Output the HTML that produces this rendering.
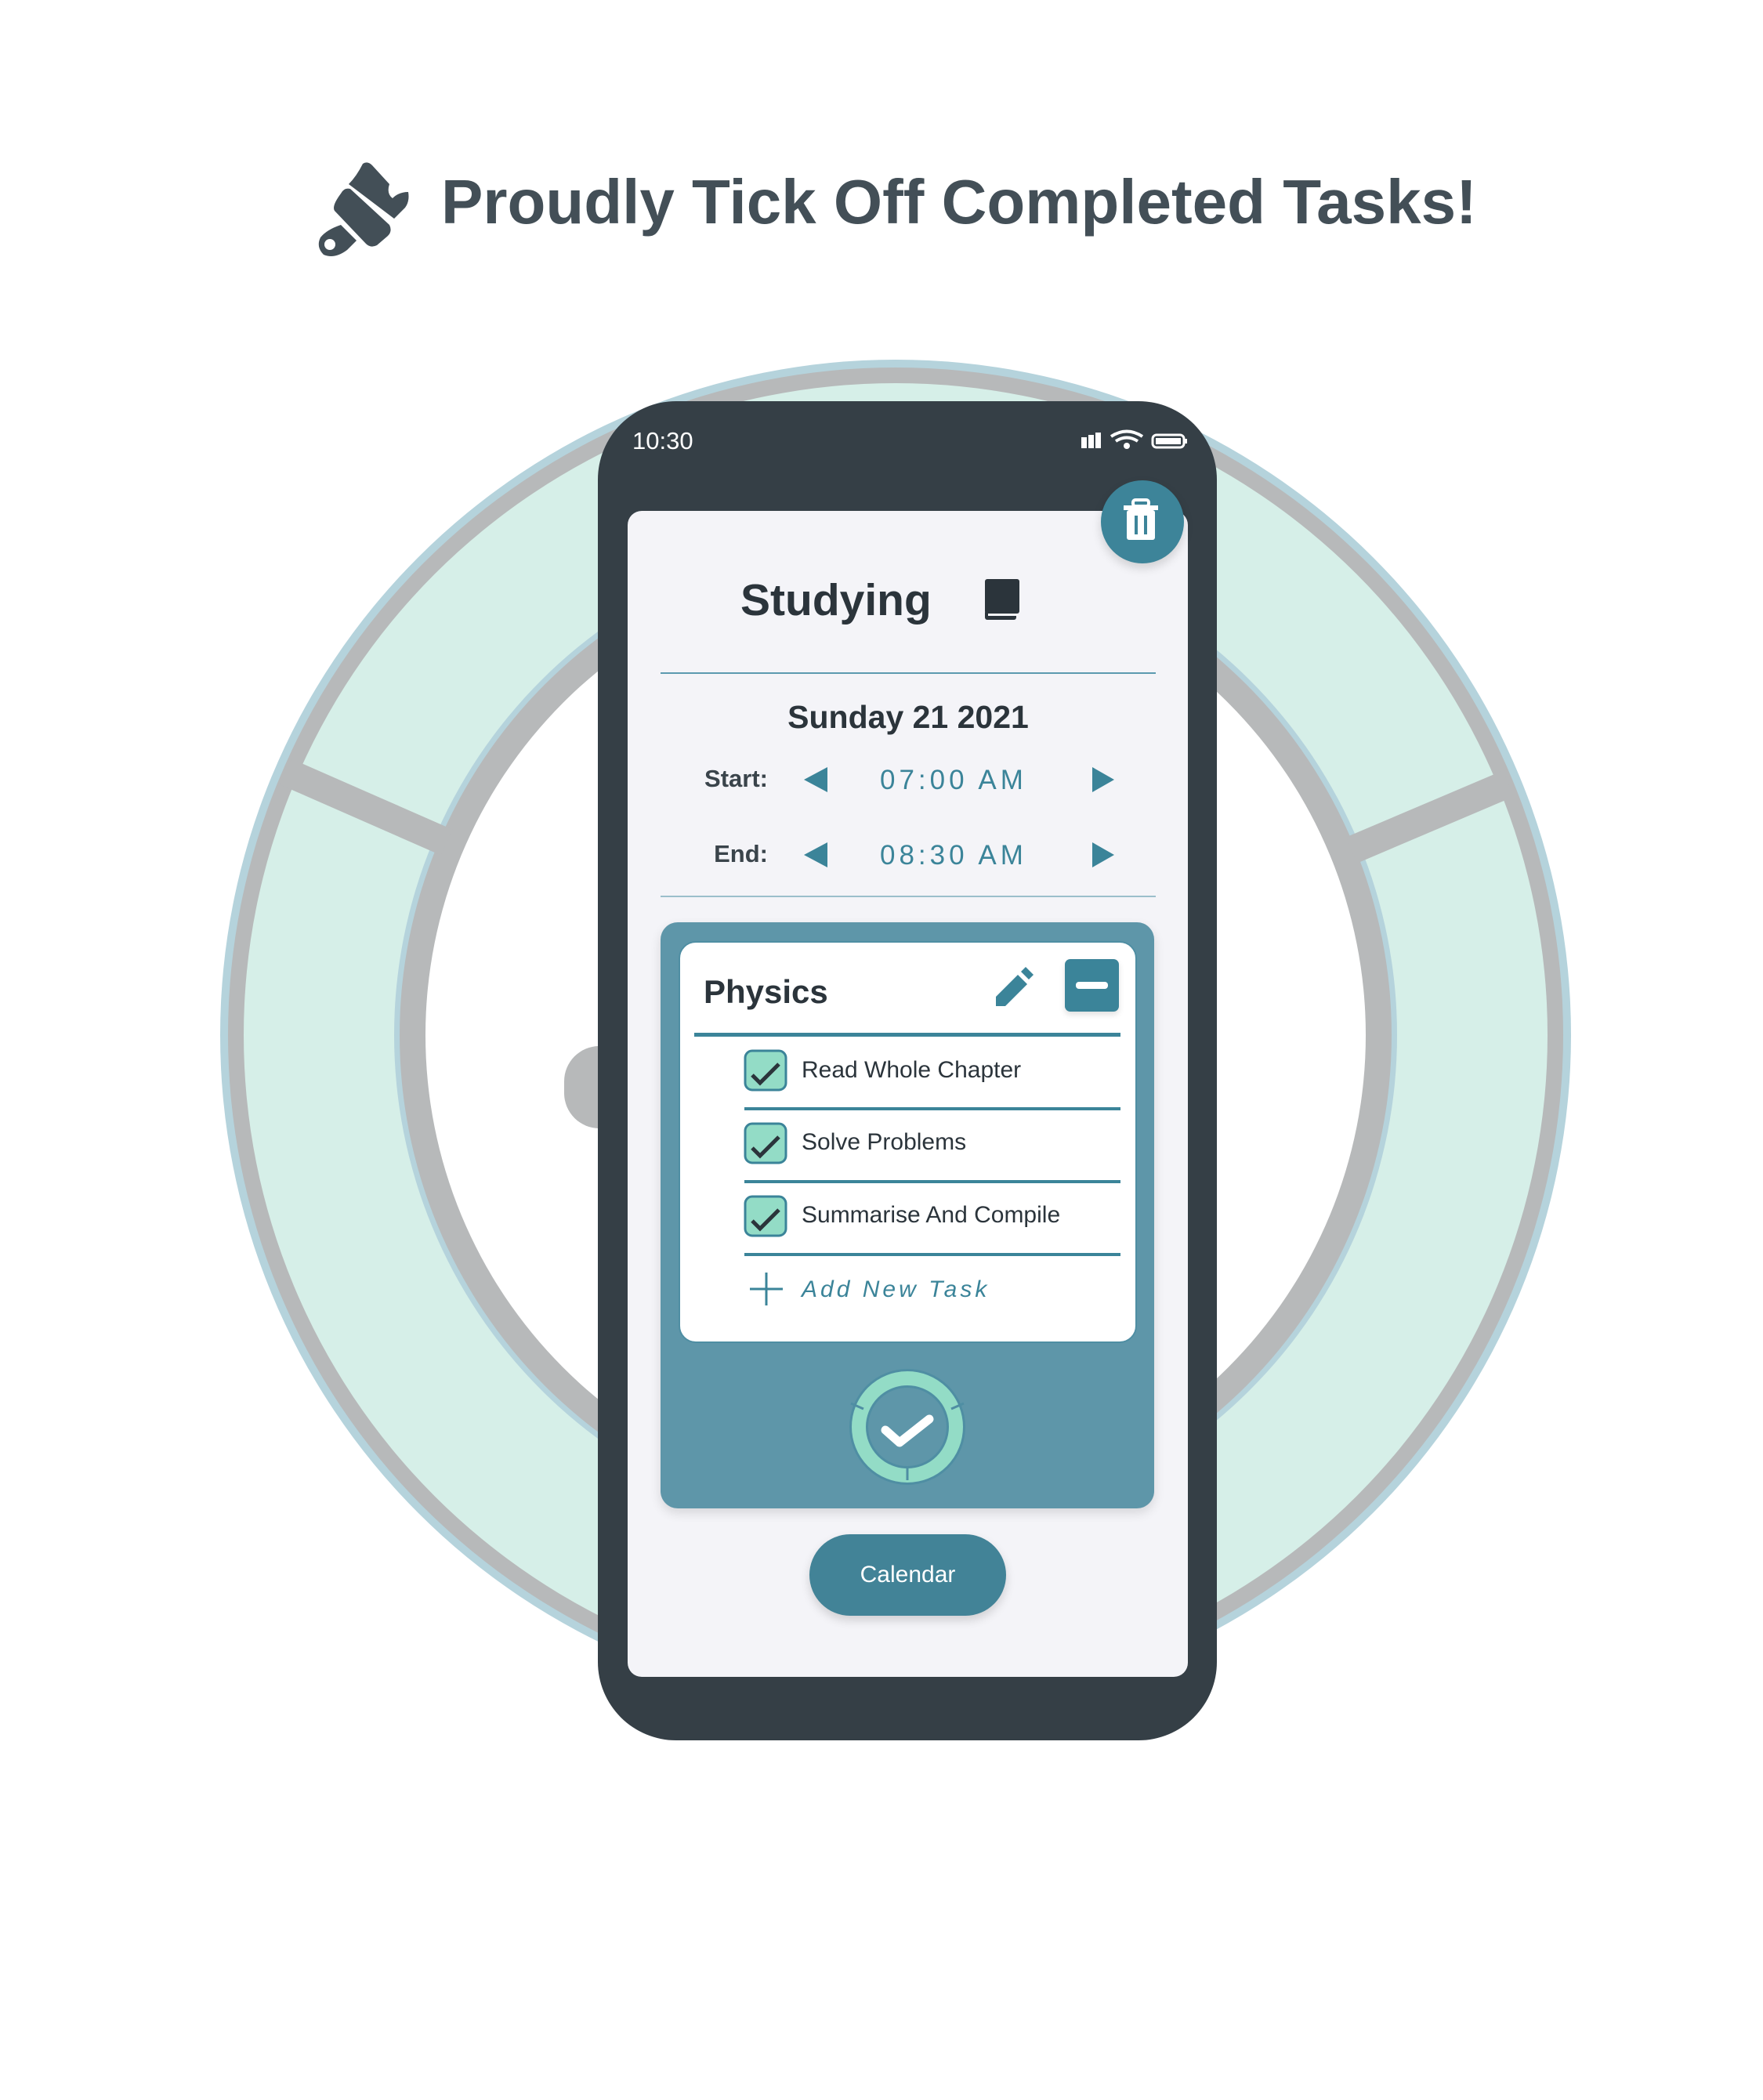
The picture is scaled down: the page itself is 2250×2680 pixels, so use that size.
<!DOCTYPE html>
<html><head><meta charset="utf-8"><style>
*{margin:0;padding:0;box-sizing:border-box}
body{width:2250px;height:2680px;background:#fff;position:relative;overflow:hidden;font-family:"Liberation Sans",sans-serif}
.a{position:absolute}
.t{position:absolute;white-space:nowrap}
</style></head><body>

<svg class="a" style="left:0;top:0" width="2250" height="2680">
 <circle cx="1143" cy="1321" r="862" fill="#b5d3dc"/>
 <circle cx="1143" cy="1321" r="852" fill="#b7b9ba"/>
 <circle cx="1143" cy="1321" r="832" fill="#d6efe8"/>
 <circle cx="1143" cy="1321" r="640" fill="#b5d3dc"/>
 <circle cx="1143" cy="1321" r="633" fill="#b7b9ba"/>
 <circle cx="1143" cy="1321" r="600" fill="#fff"/>
 <line x1="365" y1="985" x2="570" y2="1075" stroke="#b7b9ba" stroke-width="36"/>
 <line x1="1725" y1="1085" x2="1925" y2="1000" stroke="#b7b9ba" stroke-width="36"/>
 <rect x="720" y="1335" width="90" height="105" rx="45" fill="#b7b9ba"/>
 <g transform="translate(405,207)" fill="#434f57">
  <path d="M58 2 Q64 -2 70 4 L92 28 Q88 40 96 46 Q104 38 116 38 Q118 50 112 58 L98 72 L40 28 Q50 18 58 2 Z"/>
  <path d="M30 40 Q34 32 42 34 L92 80 Q96 88 90 94 L76 106 Q68 110 62 104 L22 62 Q18 56 30 40 Z"/>
  <path d="M30 80 L50 100 L38 112 Q22 124 8 118 Q-2 108 4 96 Q12 86 30 80 Z"/>
  <circle cx="16" cy="105" r="7" fill="#fff"/>
 </g>
</svg>
<div class="t" style="left:563px;top:212px;font-size:80px;color:#434f57;font-weight:bold">Proudly Tick Off Completed Tasks!</div>

<div class="a" style="left:763px;top:512px;width:790px;height:1709px;background:#353f46;border-radius:100px"></div>
<div class="t" style="left:807px;top:545px;font-size:31px;color:#fff">10:30</div>
<svg class="a" style="left:1378px;top:548px" width="140" height="30">
 <rect x="2" y="10" width="7" height="14" fill="#fff"/><rect x="11" y="7" width="7" height="17" fill="#fff"/><rect x="20" y="4" width="7" height="20" fill="#fff"/>
 <path d="M40 9 Q60 -4 80 9" stroke="#fff" stroke-width="4" fill="none"/><path d="M46 15 Q60 6 74 15" stroke="#fff" stroke-width="4" fill="none"/><circle cx="60" cy="21" r="4" fill="#fff"/>
 <rect x="93" y="7" width="40" height="16" rx="5" stroke="#fff" stroke-width="3" fill="none"/><rect x="97" y="11" width="32" height="8" fill="#fff"/><rect x="134" y="12" width="3" height="6" fill="#fff"/>
</svg>
<div class="a" style="left:801px;top:652px;width:715px;height:1488px;background:#f4f4f8;border-radius:18px"></div>

<div class="a" style="left:1405px;top:613px;width:106px;height:106px;border-radius:50%;background:#3d8499;box-shadow:0 6px 12px rgba(0,0,0,.15)"></div>
<svg class="a" style="left:1432px;top:636px" width="52" height="56"><rect x="14" y="2" width="20" height="8" rx="3" fill="none" stroke="#fff" stroke-width="4"/><rect x="2" y="9" width="44" height="6" fill="#fff"/><rect x="6" y="15" width="36" height="38" rx="3" fill="#fff"/><rect x="16" y="22" width="4" height="24" fill="#3d8499"/><rect x="28" y="22" width="4" height="24" fill="#3d8499"/></svg>

<div class="t" style="left:945px;top:733px;font-size:57px;color:#2b343b;font-weight:bold">Studying</div>
<svg class="a" style="left:1255px;top:739px" width="48" height="54"><rect x="2" y="0" width="44" height="44" rx="3" fill="#2b343b"/><rect x="2" y="40" width="40" height="12" rx="3" fill="#2b343b"/><rect x="6" y="44" width="36" height="3" fill="#f4f4f8"/></svg>
<div class="a" style="left:843px;top:858px;width:632px;height:2px;background:#5c9ab0"></div>
<div class="t" style="left:843px;width:632px;text-align:center;top:892px;font-size:41px;color:#2b343b;font-weight:bold">Sunday 21 2021</div>

<div class="t" style="left:880px;width:100px;text-align:right;top:976px;font-size:31px;color:#3a444b;font-weight:bold">Start:</div>
<div class="t" style="left:880px;width:100px;text-align:right;top:1072px;font-size:31px;color:#3a444b;font-weight:bold">End:</div>
<svg class="a" style="left:1024px;top:975px" width="400" height="140">
 <polygon points="2,20 32,4 32,36" fill="#3b8499"/><polygon points="398,20 370,4 370,36" fill="#3b8499"/>
 <polygon points="2,116 32,100 32,132" fill="#3b8499"/><polygon points="398,116 370,100 370,132" fill="#3b8499"/>
</svg>
<div class="t" style="left:1123px;top:976px;font-size:35px;color:#3b8499;letter-spacing:5px">07:00 AM</div>
<div class="t" style="left:1123px;top:1072px;font-size:35px;color:#3b8499;letter-spacing:5px">08:30 AM</div>
<div class="a" style="left:843px;top:1143px;width:632px;height:2px;background:#9bbfcb"></div>

<div class="a" style="left:843px;top:1177px;width:630px;height:748px;background:#5e96a9;border-radius:22px;box-shadow:0 6px 14px rgba(0,0,0,.12)"></div>
<div class="a" style="left:866px;top:1201px;width:585px;height:513px;background:#fff;border-radius:22px;border:2px solid #4f8ea3"></div>
<div class="t" style="left:898px;top:1242px;font-size:42px;color:#2b343b;font-weight:bold">Physics</div>
<svg class="a" style="left:1267px;top:1232px" width="52" height="52"><path d="M4 40 L32 12 L44 24 L16 52 L4 52 Z" fill="#3b8499"/><path d="M36 8 L42 2 L52 12 L46 18 Z" fill="#3b8499"/></svg>
<div class="a" style="left:1359px;top:1224px;width:69px;height:67px;background:#3b8499;border-radius:7px;box-shadow:0 4px 8px rgba(0,0,0,.12)"></div>
<div class="a" style="left:1373px;top:1253px;width:41px;height:9px;background:#fff;border-radius:4px"></div>
<div class="a" style="left:886px;top:1318px;width:544px;height:5px;background:#3b8499"></div>

<svg class="a" style="left:948px;top:1338px" width="60" height="260">
 <g><rect x="3" y="3" width="52" height="50" rx="9" fill="#93dcc6" stroke="#3b8499" stroke-width="3"/><path d="M12 34 L22 44 L46 20" stroke="#2b343b" stroke-width="5" fill="none"/></g>
 <g transform="translate(0,93)"><rect x="3" y="3" width="52" height="50" rx="9" fill="#93dcc6" stroke="#3b8499" stroke-width="3"/><path d="M12 34 L22 44 L46 20" stroke="#2b343b" stroke-width="5" fill="none"/></g>
 <g transform="translate(0,186)"><rect x="3" y="3" width="52" height="50" rx="9" fill="#93dcc6" stroke="#3b8499" stroke-width="3"/><path d="M12 34 L22 44 L46 20" stroke="#2b343b" stroke-width="5" fill="none"/></g>
</svg>
<div class="t" style="left:1023px;top:1349px;font-size:30px;color:#2b343b">Read Whole Chapter</div>
<div class="t" style="left:1023px;top:1441px;font-size:30px;color:#2b343b">Solve Problems</div>
<div class="t" style="left:1023px;top:1534px;font-size:30px;color:#2b343b">Summarise And Compile</div>
<div class="a" style="left:950px;top:1413px;width:480px;height:4px;background:#3b8499"></div>
<div class="a" style="left:950px;top:1506px;width:480px;height:4px;background:#3b8499"></div>
<div class="a" style="left:950px;top:1599px;width:480px;height:4px;background:#3b8499"></div>
<svg class="a" style="left:955px;top:1622px" width="46" height="46"><path d="M23 2 V44 M2 23 H44" stroke="#3b8499" stroke-width="3"/></svg>
<div class="t" style="left:1023px;top:1629px;font-size:30px;color:#3b8499;font-style:italic;letter-spacing:4px">Add New Task</div>

<svg class="a" style="left:1080px;top:1743px" width="156" height="156">
 <circle cx="78" cy="78" r="62" fill="none" stroke="#4f8ea3" stroke-width="24"/>
 <circle cx="78" cy="78" r="62" fill="none" stroke="#93dcc6" stroke-width="18"/>
 <path d="M78 130 V146 M22 55 L6 48 M134 55 L150 48" stroke="#4f8ea3" stroke-width="3"/>
 <path d="M50 82 L68 98 L106 68" stroke="#fff" stroke-width="11" stroke-linecap="round" stroke-linejoin="round" fill="none"/>
</svg>

<div class="a" style="left:1033px;top:1958px;width:251px;height:104px;border-radius:52px;background:#428397;box-shadow:0 6px 12px rgba(0,0,0,.15)"></div>
<div class="t" style="left:1033px;width:251px;text-align:center;top:1993px;font-size:30px;color:#fff">Calendar</div>
</body></html>
